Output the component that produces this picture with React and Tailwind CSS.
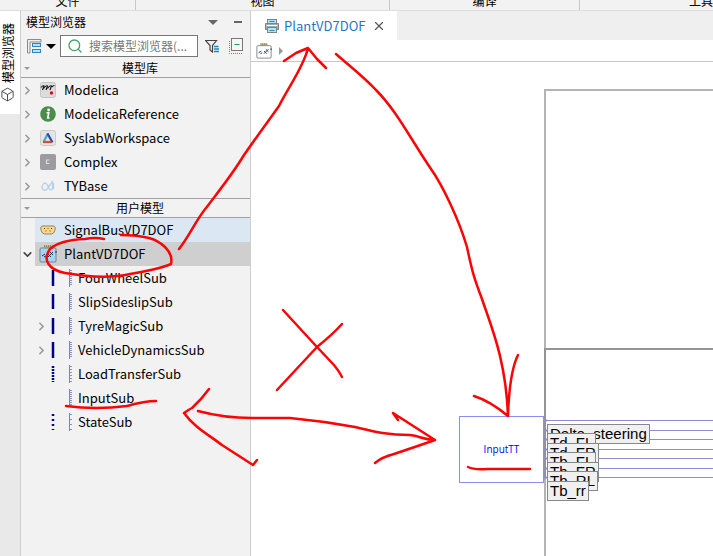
import { useState } from 'react'
import { Box, ChevronDown, ChevronRight, Search, X } from 'lucide-react'

/* ── Icons ── */

const ModelicaIcon = () => (
  <svg viewBox="0 0 16 16" className="size-4">
    <rect x="0.5" y="0.5" width="15" height="15" rx="2" fill="#dcdcdc" stroke="#c4c4c4" />
    <path d="M1 5.500q2-2.500 3-1.500L2.500 8M3.500 6.500q2.500-3.500 4-2.500L6 8M7.500 6.500q2.500-3.500 4-2.500L10 8M12 5q1-1.500 2.500-1.500" fill="none" stroke="#111" strokeWidth="1.100" />
    <circle cx="11.500" cy="11" r="1.700" fill="#d01020" />
  </svg>
)

const InfoIcon = () => (
  <svg viewBox="0 0 16 16" className="size-4">
    <circle cx="8" cy="8" r="7.800" fill="#4a8c4a" />
    <circle cx="8.600" cy="4" r="1.400" fill="#fff" />
    <path d="M6.500 6.800h2.200l-1 5.200h1.800" fill="none" stroke="#fff" strokeWidth="1.600" />
  </svg>
)

const WorkspaceIcon = () => (
  <svg viewBox="0 0 16 16" className="size-4">
    <rect x="0.5" y="0.5" width="15" height="15" rx="2" fill="#e4e4e4" stroke="#cacaca" />
    <path d="M8 3.500L3.500 12" stroke="#4aa3dc" strokeWidth="2.200" />
    <path d="M7.500 3.500L12.500 12.500" stroke="#1d4f9c" strokeWidth="2.200" />
    <path d="M3 12h8.500" stroke="#dc4a30" strokeWidth="2.200" />
  </svg>
)

const ComplexIcon = () => (
  <svg viewBox="0 0 16 16" className="size-4">
    <rect width="16" height="16" rx="2" fill="#9c9ca0" />
    <path d="M9.500 6H6.500v3.500h3" fill="none" stroke="#e6d8d8" strokeWidth="1.200" />
  </svg>
)

const BaseIcon = () => (
  <svg viewBox="0 0 16 16" className="size-4" fill="none" stroke="#b4d2ea" strokeWidth="1.300">
    <path d="M12.500 3.500L7 11q-2 2.500-4 0.500t0-5 4 0l2 4q2 2.500 3.500 0.500V4L8 9M13.500 5v6" />
  </svg>
)

const BusIcon = () => (
  <svg viewBox="0 0 16 16" className="size-4">
    <path d="M2 4h12q2 1 1 4l-1.500 3-2 1h-7l-2-1L1 8Q0 5 2 4z" fill="#f8d890" stroke="#a08050" />
    <path d="M4 6.500h1M7.500 6.500h1M11 6.500h1M5.500 9h1M9.500 9h1" stroke="#604020" strokeWidth="1.200" />
  </svg>
)

const PlantIcon = ({ fill, className }) => (
  <svg viewBox="0 0 18 18" className={className}>
    <path d="M5 0.500h8v3H5z" fill="#c8b070" />
    <path d="M5 1h8" stroke="#705c28" strokeDasharray="1 1" />
    <rect x="1" y="3" width="16" height="14" rx="1" fill={fill} stroke="#7a8086" />
    <path d="M3 11l3-2M5 12l2-1M9 12l5-5M9 9l3 3M11 7l3 3" stroke="#22303c" />
    <path d="M17 6v2" stroke="#2020a0" />
  </svg>
)

const LayoutIcon = () => (
  <svg viewBox="0 0 16 16" className="size-4" fill="none">
    <path d="M15 1.500H1.500V15H4V4h11z" fill="#eee" stroke="#8a8a8a" />
    <rect x="6.500" y="5.500" width="8" height="3" fill="#b8e0f8" stroke="#2b86c8" />
    <rect x="6.500" y="11.500" width="8" height="3" fill="#b8e0f8" stroke="#2b86c8" />
  </svg>
)

const FilterIcon = () => (
  <svg viewBox="0 0 14 14" className="size-3.5" fill="none">
    <path d="M0.500 1.500h11L7.500 6.500v6.500L5 11V6.500z" stroke="#444" strokeWidth="1.200" />
    <path d="M9 7.500h4.500M9 10h5M9 12.500h5" stroke="#1a88cc" strokeWidth="1.400" />
  </svg>
)

const CollapseIcon = () => (
  <svg viewBox="0 0 16 16" className="size-4" fill="none">
    <path d="M1.500 3v12.500H14" stroke="#48a060" strokeDasharray="1 1" />
    <rect x="3.500" y="0.500" width="11" height="12" fill="#f6f6f6" stroke="#777" />
    <path d="M6.500 6.500h5" stroke="#209850" />
  </svg>
)

const TabIcon = () => (
  <svg viewBox="0 0 14 14" className="size-3.5">
    <rect x="2.500" y="0.500" width="9" height="5" fill="#b8e2f8" stroke="#7c8488" />
    <rect x="2.500" y="8.500" width="9" height="5" fill="#b8e2f8" stroke="#7c8488" />
    <path d="M.5 4.500h13v6h-2v-2h-9v2h-2z" fill="#a4acb0" stroke="#7c8488" />
    <path d="M1.500 6.500h11" stroke="#fff" />
    <path d="M4.500 2.500h5M4.500 11.500h5" stroke="#2888c8" />
  </svg>
)

/* Port marks: inputs to the left of the block, block outline to the right */
const SubIcon = ({ ports, teeth }) => (
  <svg viewBox="0 0 20 18" className="h-[18px] w-5 shrink-0 overflow-visible" fill="none">
    {ports && <path d="M2 1v16" stroke="#000088" strokeWidth="2.500" strokeDasharray={ports} />}
    <path d="M18.500 0v18" stroke="#8080c0" />
    <path d="M20 1v16" stroke="#9090c8" strokeWidth="2" strokeDasharray={teeth} />
  </svg>
)

/* ── Data ── */

const LIBRARIES = [
  { name: 'Modelica', icon: ModelicaIcon },
  { name: 'ModelicaReference', icon: InfoIcon },
  { name: 'SyslabWorkspace', icon: WorkspaceIcon },
  { name: 'Complex', icon: ComplexIcon },
  { name: 'TYBase', icon: BaseIcon },
]

const SUB_MODELS = [
  { name: 'FourWheelSub', ports: '16 0', teeth: '1 1' },
  { name: 'SlipSideslipSub', ports: '15 1', teeth: '1 1' },
  { name: 'TyreMagicSub', ports: '16 0', teeth: '1 1', expandable: true },
  { name: 'VehicleDynamicsSub', ports: '16 0', teeth: '1 1', expandable: true },
  { name: 'LoadTransferSub', ports: '2 1', teeth: '1 2' },
  { name: 'InputSub', teeth: '1 1' },
  { name: 'StateSub', ports: '2 3', teeth: '1 4' },
]

const PORTS = [
  { name: 'Delta_steering', pos: 'top-[362px]' },
  { name: 'Td_FL', pos: 'top-[371px]' },
  { name: 'Td_FR', pos: 'top-[381px]' },
  { name: 'Tb_FL', pos: 'top-[390px]' },
  { name: 'Tb_FR', pos: 'top-[400px]' },
  { name: 'Tb_RL', pos: 'top-[409px]' },
  { name: 'Tb_rr', pos: 'top-[419px]' },
]

const STROKES = [
  'M104 239Q95 237 85 239Q60 240 50 249C42 260 49 270 65 273C88 277 112 278 130 274C148 271 162 268 171 264C174 251 160 241 149 238Q137 235 121 235',
  'M179 249C190 235 196 220 206 208C218 192 232 175 244 155C260 132 272 116 279 106C288 88 304 66 308 48M284 61L296 53L308 48L317 59L326 68',
  'M336 54C352 68 365 78 376 90C396 110 410 138 431 169C443 186 459 220 467 247C472 271 474 278 482 299C491 326 506 360 508 416M474 396Q490 401 508 416C509 385 513 365 518 355',
  'M283 310L317 347L334 365Q339 371 342 377M342 324Q332 335 317 347L277 390',
  'M198 411Q224 418 252 418H290Q322 421 355 427C372 431 386 435 410 435C420 436 424 440 435 440M393 413L398 420M393 413L435 440M375 463Q382 457 394 454Q412 448 435 440',
  'M209 389Q201 400 192 408Q188 410 184 413C194 427 209 435 222 445Q239 456 253 465L257 460',
  'M66 406Q96 410 127 406Q145 401 156 401',
  'M468 467Q474 470 487 469H530',
]

/* ── Side panel ── */

function SectionHeader({ title }) {
  return (
    <button className="flex h-[19px] w-full items-center border-b border-[#a0a0a0] pl-[3px]">
      <span className="size-0 border-x-[3px] border-t-[3px] border-x-transparent border-t-[#999]" />
      <span className="flex-1 text-center">{title}</span>
    </button>
  )
}

function ModelBrowser() {
  const [query, setQuery] = useState('')

  return (
    <aside className="flex w-[231px] shrink-0 flex-col border-x border-[#cdcdcd] bg-[#f2f2f2] text-xs text-black">
      <header className="flex h-[22px] items-center pl-[5px] pr-1">
        <h2 className="flex-1">模型浏览器</h2>
        <button aria-label="菜单" className="px-3">
          <span className="block size-0 border-x-[5px] border-t-[5px] border-x-transparent border-t-[#666]" />
        </button>
        <button aria-label="最小化" className="px-1">
          <span className="block h-0.5 w-2 bg-[#666]" />
        </button>
      </header>

      <div className="flex h-[26px] items-center pl-[5px] pr-1.5">
        <button aria-label="视图" className="flex items-center gap-1">
          <LayoutIcon />
          <span className="size-0 border-x-[5px] border-t-[5px] border-x-transparent border-t-black" />
        </button>
        <label className="ml-1 flex h-[22px] min-w-0 flex-1 items-center gap-1.5 border border-[#777] bg-white pl-1.5">
          <Search size={16} strokeWidth={2} className="shrink-0 text-[#45a067]" />
          <input
            value={query}
            onChange={(e) => setQuery(e.target.value)}
            aria-label="搜索模型浏览器"
            placeholder="搜索模型浏览器(..."
            className="w-full min-w-0 outline-none placeholder:text-[#777]"
          />
        </label>
        <button aria-label="筛选" className="ml-[7px]"><FilterIcon /></button>
        <button aria-label="全部折叠" className="ml-[9px]"><CollapseIcon /></button>
      </div>

      <SectionHeader title="模型库" />
      <ul className="h-[121px] border-b border-[#a0a0a0] text-[13px]">
        {LIBRARIES.map(({ name, icon: Icon }) => (
          <li key={name} className="flex h-6 items-center">
            <button aria-label="展开" className="w-[19px]">
              <ChevronRight size={13} strokeWidth={3} className="text-[#999]" />
            </button>
            <Icon />
            <span className="ml-2">{name}</span>
          </li>
        ))}
      </ul>

      <SectionHeader title="用户模型" />
      <ul className="text-[13px]">
        <li className="ml-3.5 flex h-6 items-center bg-[#dbe8f3] pl-[5px]">
          <BusIcon />
          <span className="ml-2">SignalBusVD7DOF</span>
        </li>
        <li className="flex h-6 items-center">
          <button aria-label="折叠" className="w-3.5">
            <ChevronDown size={13} strokeWidth={3} className="text-[#444]" />
          </button>
          <div className="flex h-full flex-1 items-center bg-[#cfcfcf] pl-1">
            <PlantIcon fill="#a6d4f4" className="size-[18px]" />
            <span className="ml-[7px]">PlantVD7DOF</span>
          </div>
        </li>
        {SUB_MODELS.map((sub) => (
          <li key={sub.name} className="flex h-6 items-center pl-3.5">
            <div className="flex w-4 items-center">
              {sub.expandable && (
                <button aria-label="展开">
                  <ChevronRight size={13} strokeWidth={3} className="text-[#999]" />
                </button>
              )}
            </div>
            <SubIcon ports={sub.ports} teeth={sub.teeth} />
            <span className="ml-[7px]">{sub.name}</span>
          </li>
        ))}
      </ul>
    </aside>
  )
}

/* ── Diagram ── */

function Diagram() {
  return (
    <div className="relative flex-1 overflow-hidden bg-white">
      <svg className="absolute inset-0 size-full" fill="none">
        <path d="M294 600V28H900" stroke="#b4b4b4" strokeWidth="2" />
        <path d="M294 416V287H900" stroke="#949494" strokeWidth="2" />
        {PORTS.map((port, i) => (
          <g key={port.name} stroke="#8c8cd0">
            <path d="M293 0.500H900" transform={`translate(0 ${358 + Math.round(i * 9.5)})`} />
            <circle cx="294" cy={358.5 + Math.round(i * 9.5)} r="1.500" />
          </g>
        ))}
      </svg>
      <div className="absolute left-[208px] top-[354px] flex h-[67px] w-[85px] items-center justify-center border border-[#8c8cf4] bg-white font-['Open_Sans',sans-serif] text-[10px] text-[#0000ff]">
        InputTT
      </div>
      {PORTS.map((port) => (
        <div
          key={port.name}
          className={`absolute left-[296px] flex h-5 items-center border border-[#888] bg-[#f0f0f0] px-0.5 font-['Liberation_Sans',Arial,sans-serif] text-[15px] text-black ${port.pos}`}
        >
          {port.name}
        </div>
      ))}
    </div>
  )
}

export default function App() {
  return (
    <div className="relative flex h-screen flex-col overflow-hidden bg-[#f2f2f2] font-['Noto_Sans_CJK_SC',sans-serif]">
      {/* ── Ribbon groups ── */}
      <div className="flex h-[11px] shrink-0 items-end overflow-hidden border-b border-[#dedede] text-xs leading-3 text-black">
        <span className="flex h-full w-[136px] items-end justify-center border-r border-[#c8c8c8] pb-[3px]">文件</span>
        <span className="flex h-full w-[254px] items-end justify-center border-r border-[#c8c8c8] pb-[3px]">视图</span>
        <span className="flex h-full w-[190px] items-end justify-center border-r border-[#c8c8c8] pb-[3px]">编译</span>
        <span className="flex h-full flex-1 items-end justify-end pb-[3px]">工具</span>
      </div>

      <div className="flex min-h-0 flex-1">
        {/* ── Dock rail ── */}
        <nav className="w-5 shrink-0 bg-[#e9e9e9] text-xs">
          <button className="flex h-[103px] w-full flex-col items-center gap-1 bg-white pt-3 text-black">
            <span className="mr-1 rotate-180 leading-4 [text-orientation:sideways] [writing-mode:vertical-rl]">模型浏览器</span>
            <Box size={15} strokeWidth={1.5} className="mr-1.5 text-[#444]" />
          </button>
        </nav>

        <ModelBrowser />

        <main className="flex min-w-0 flex-1 flex-col">
          <div className="flex h-[29px] bg-[#efefef]">
            <div className="flex w-[146px] items-center bg-white pl-[14px] text-[13px] text-[#1c78c8]">
              <TabIcon />
              <span className="ml-[5px]">PlantVD7DOF</span>
              <button aria-label="关闭" className="ml-[7px]">
                <X size={14} strokeWidth={2} className="text-[#555]" />
              </button>
            </div>
          </div>
          <div className="flex h-[22px] items-center gap-[7px] border-b border-[#c8c8c8] bg-white pl-[5px]">
            <PlantIcon fill="#fff" className="size-4" />
            <span className="size-0 border-y-4 border-l-4 border-y-transparent border-l-[#999]" />
          </div>
          <Diagram />
        </main>
      </div>

      {/* ── Pen annotations ── */}
      <svg className="pointer-events-none absolute inset-0 size-full" fill="none" stroke="#fa0505" strokeWidth="2.500" strokeLinecap="round" strokeLinejoin="round">
        {STROKES.map((d) => (
          <path key={d} d={d} />
        ))}
      </svg>
    </div>
  )
}
